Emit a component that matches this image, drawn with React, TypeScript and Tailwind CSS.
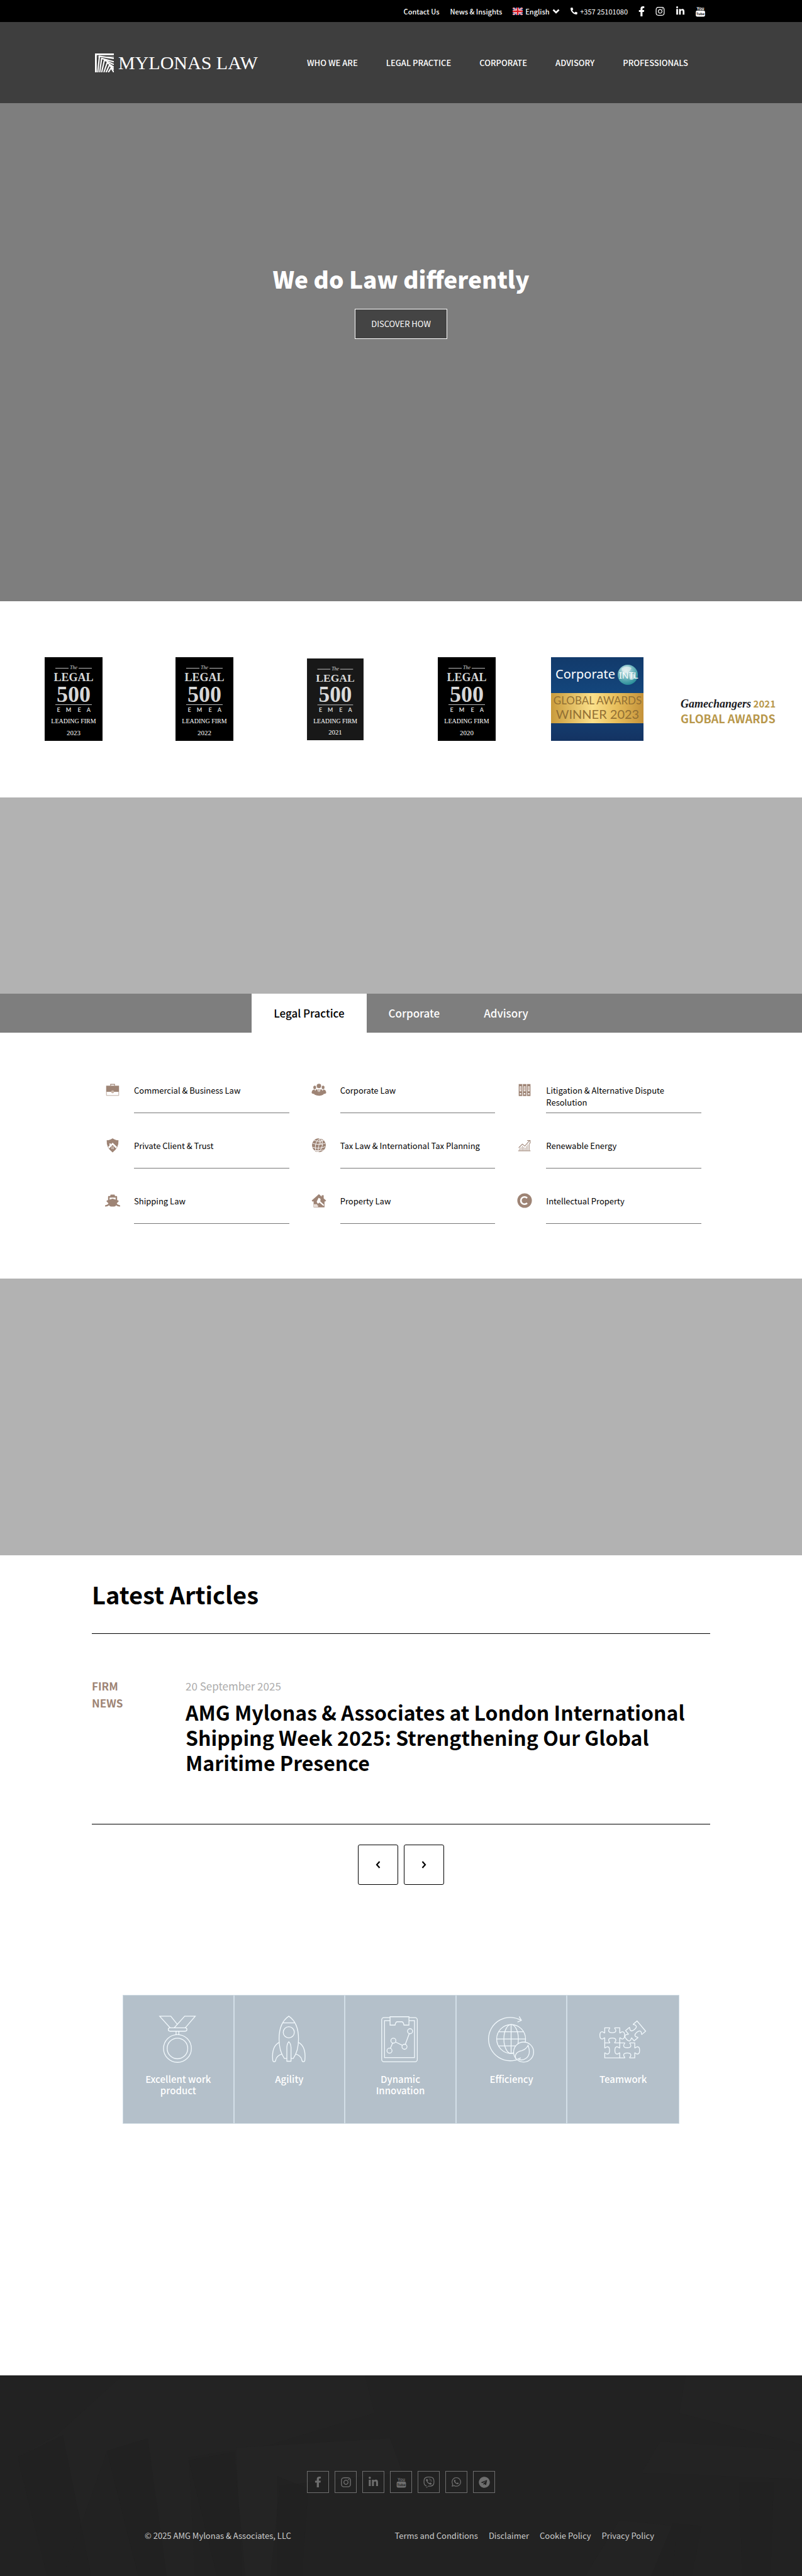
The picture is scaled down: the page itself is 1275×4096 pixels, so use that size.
import type { ReactNode } from 'react';
import {
  FaFacebookF,
  FaInstagram,
  FaLinkedinIn,
  FaPhone,
  FaShip,
  FaTelegram,
  FaViber,
  FaWhatsapp,
} from 'react-icons/fa';

function YoutubeIcon({ className, ink }: { className: string; ink: string }) {
  return (
    <svg viewBox="0 0 18 22" className={className} aria-hidden="true">
      <text
        x="9"
        y="8"
        textAnchor="middle"
        fontSize="8"
        fontWeight="700"
        fontFamily="Liberation Sans, sans-serif"
        fill="currentColor"
      >
        You
      </text>
      <rect x="0" y="9.5" width="18" height="12" rx="3" fill="currentColor" />
      <text
        x="9"
        y="18"
        textAnchor="middle"
        fontSize="7"
        fontWeight="700"
        fontFamily="Liberation Sans, sans-serif"
        fill={ink}
      >
        Tube
      </text>
    </svg>
  );
}

function Flag() {
  return (
    <svg viewBox="0 0 32 24" className="h-3 w-4" aria-hidden="true">
      <rect width="32" height="24" fill="#1d2f7c" />
      <path d="M0 0L32 24M32 0L0 24" stroke="#fff" strokeWidth="5" />
      <path d="M0 0L32 24M32 0L0 24" stroke="#d22" strokeWidth="2" />
      <path d="M16 0V24M0 12H32" stroke="#fff" strokeWidth="8" />
      <path d="M16 0V24M0 12H32" stroke="#d8131f" strokeWidth="5" />
    </svg>
  );
}

function LogoMark() {
  return (
    <svg viewBox="0 0 34 34" className="h-[30px] w-[30px]" aria-hidden="true">
      <g fill="none" stroke="#fff" strokeWidth="2.4">
        <path d="M1.6 34V1.6H34" strokeWidth="3.2" />
        <path d="M5 34L8 5L34 9" />
        <path d="M8.5 34L12 9L34 15" />
        <path d="M12 34L17 12L34 20" />
        <path d="M16 34L22 16.500L34 25" />
        <path d="M20 34L26 21L34 29" />
        <path d="M24 34L29 26L34 34" />
        <path d="M5 6L34 6.500" strokeWidth="1" />
      </g>
    </svg>
  );
}

function Legal500({ year, className }: { year: string; className: string }) {
  return (
    <svg viewBox="0 0 92 133" className={className} role="img" aria-label={`The Legal 500 EMEA leading firm ${year}`}>
      <rect width="92" height="133" fill="#000" />
      <path d="M17 17.500H38M54 17.500H75M17 75.500H75" stroke="#bbb" strokeWidth="1" />
      <g fill="#d6d6d6" textAnchor="middle" fontFamily="Liberation Serif, serif">
        <text x="46" y="19" fontSize="8" fontStyle="italic">The</text>
        <text x="46" y="38" fontSize="18" fontWeight="700">LEGAL</text>
        <text x="46" y="71" fontSize="36" fontWeight="700">500</text>
      </g>
      <g fill="#d6d6d6" textAnchor="middle" fontSize="9" fontWeight="700" fontFamily="Lato, sans-serif">
        <text x="22" y="87">E</text>
        <text x="38" y="87">M</text>
        <text x="55" y="87">E</text>
        <text x="70" y="87">A</text>
      </g>
      <g fill="#fff" textAnchor="middle" fontFamily="Liberation Serif, serif">
        <text x="46" y="105" fontSize="10">LEADING FIRM</text>
        <text x="46" y="124" fontSize="11">{year}</text>
      </g>
    </svg>
  );
}

function CorporateIntl() {
  return (
    <svg viewBox="0 0 147 133" className="h-[133px] w-[147px]" role="img" aria-label="Corporate INTL Global Awards Winner 2023">
      <defs>
        <linearGradient id="gold" x1="0" x2="1">
          <stop offset="0" stopColor="#c99b3c" />
          <stop offset="0.45" stopColor="#fbe08a" />
          <stop offset="0.7" stopColor="#e8bf5c" />
          <stop offset="1" stopColor="#c4923a" />
        </linearGradient>
        <linearGradient id="sea" x1="0" x2="0" y1="0" y2="1">
          <stop offset="0" stopColor="#123a6b" />
          <stop offset="0.5" stopColor="#14487f" />
          <stop offset="1" stopColor="#143362" />
        </linearGradient>
        <radialGradient id="globe" cx="0.4" cy="0.3" r="0.8">
          <stop offset="0" stopColor="#d9eef0" />
          <stop offset="0.5" stopColor="#6bb3bb" />
          <stop offset="1" stopColor="#14828d" />
        </radialGradient>
      </defs>
      <rect width="147" height="133" fill="url(#sea)" />
      <rect y="57" width="147" height="48" fill="url(#gold)" />
      <circle cx="122" cy="28" r="16" fill="url(#globe)" />
      <path d="M112 18Q120 12 128 17Q124 26 118 25Q113 24 112 18ZM124 27Q134 24 134 32Q129 38 125 35Z" fill="#e6eff0" opacity="0.7" />
      <g fontFamily="Noto Sans, sans-serif" fill="#fff">
        <text x="7" y="34" fontSize="20">Corporate</text>
        <text x="108" y="34" fontSize="14">INTL</text>
      </g>
      <g fontFamily="Lato, sans-serif" fill="#927034" textAnchor="middle">
        <text x="74" y="75" fontSize="17">GLOBAL AWARDS</text>
        <text x="74" y="98" fontSize="20">WINNER 2023</text>
      </g>
    </svg>
  );
}

function Gamechangers() {
  return (
    <svg viewBox="0 0 152 133" className="h-[133px] w-[152px]" role="img" aria-label="Gamechangers 2021 Global Awards">
      <g fontFamily="Noto Sans CJK SC, sans-serif" fill="#b8974a" fontWeight="700">
        <text x="151" y="80" fontSize="15" textAnchor="end">2021</text>
        <text x="0" y="105" fontSize="18">GLOBAL AWARDS</text>
      </g>
      <text x="0" y="80" fontSize="18" fontWeight="700" fontStyle="italic" fontFamily="Liberation Serif, serif" fill="#1b1b1f">
        Gamechangers
      </text>
    </svg>
  );
}

function SmallIcon({ children }: { children: ReactNode }) {
  return (
    <svg viewBox="0 0 27 27" className="h-6 w-6" fill="#9e8475" aria-hidden="true">
      {children}
    </svg>
  );
}

const practices: { label: string; icon: ReactNode }[] = [
  {
    label: 'Commercial & Business Law',
    icon: (
      <SmallIcon>
        <path d="M10 6V3.500H17V6" fill="none" stroke="#9e8475" strokeWidth="1.400" />
        <rect x="2" y="6" width="23" height="11" />
        <path d="M2.500 17V23.500H24.500V17" fill="none" stroke="#b5a196" strokeWidth="1" />
        <circle cx="13.500" cy="17" r="2.600" fill="#c9b5a8" />
      </SmallIcon>
    ),
  },
  {
    label: 'Corporate Law',
    icon: (
      <SmallIcon>
        <circle cx="13.500" cy="6.500" r="4" />
        <ellipse cx="6" cy="9" rx="2.500" ry="3.200" />
        <ellipse cx="21" cy="9" rx="2.500" ry="3.200" />
        <path d="M0.500 19Q0.500 13 6 13L8.500 21Q2 21 0.500 19ZM26.500 19Q26.500 13 21 13L18.500 21Q25 21 26.500 19Z" />
        <path d="M5.500 22Q6 12.500 10.500 12L13.500 21L16.500 12Q21 12.500 21.500 22Q13.500 26 5.500 22Z" />
        <path d="M12.500 12.500H14.500L14 16L15 19L13.500 21L12 19L13 16Z" />
      </SmallIcon>
    ),
  },
  {
    label: 'Litigation & Alternative Dispute Resolution',
    icon: (
      <SmallIcon>
        <path d="M3 3H9.300V24.500H3ZM10.400 3H16.700V24.500H10.400ZM17.800 3H24V24.500H17.800Z" />
        <path d="M4.500 7H7.800V16H4.500ZM11.900 7H15.200V16H11.900ZM19.300 7H22.600V16H19.300Z" fill="#f3ece8" />
        <circle cx="6.100" cy="20.500" r="1.400" fill="#fff" />
        <circle cx="13.500" cy="20.500" r="1.400" fill="#fff" />
        <circle cx="20.900" cy="20.500" r="1.400" fill="#fff" />
        <path d="M5.500 8.500H7V14H5.500ZM12.900 8.500H14.400V14H12.900ZM20.200 8.500H21.700V14H20.200Z" fill="#c7b5ab" />
      </SmallIcon>
    ),
  },
  {
    label: 'Private Client & Trust',
    icon: (
      <SmallIcon>
        <path d="M13.500 1Q18 4.500 24 4.500Q25 18 13.500 26.500Q2 18 3 4.500Q9 4.500 13.500 1Z" />
        <path d="M5.500 16.500L13.500 9L21.500 16.500L19.500 19L13.500 13L7.500 19Z" fill="#fff" />
        <path d="M8 10H10V13L8 15Z" fill="#fff" />
        <path d="M11.500 16H13V17.500H11.500ZM14 16H15.500V17.500H14ZM11.500 18.500H13V20H11.500ZM14 18.500H15.500V20H14Z" fill="#fff" />
      </SmallIcon>
    ),
  },
  {
    label: 'Tax Law & International Tax Planning',
    icon: (
      <SmallIcon>
        <circle cx="13.500" cy="13.500" r="12.300" />
        <g fill="none" stroke="#fff" strokeWidth="1">
          <ellipse cx="13.500" cy="13.500" rx="6" ry="12" transform="rotate(14 13.500 13.500)" />
          <path d="M15.500 1L11.500 26M2 10Q13 14 25 10M2 17Q13 21 25 16M5 5Q13 8 22 5M5 23Q13 24 22 22" />
        </g>
        <path d="M15 7H21V11H15Z" />
        <path d="M16.500 6Q18 4 19.500 6V11H16.500Z" fill="none" stroke="#fff" strokeWidth="1" />
      </SmallIcon>
    ),
  },
  {
    label: 'Renewable Energy',
    icon: (
      <SmallIcon>
        <g fill="none" stroke="#9e8475" strokeWidth="1.200">
          <path d="M2 23.500H24" />
          <path d="M3 18L9.500 11.500L14 15L22.500 5M18 5H23.500V10.500" />
          <path d="M4.500 19V23M7 17V23M9.500 15V23M12 16.500V23M14.500 18V23M17 15V23M19.500 12V23M22 9.500V23" strokeWidth="0.900" />
        </g>
      </SmallIcon>
    ),
  },
  {
    label: 'Shipping Law',
    icon: <FaShip className="h-6 w-6 text-[#9e8475]" aria-hidden="true" />,
  },
  {
    label: 'Property Law',
    icon: (
      <SmallIcon>
        <path d="M13.500 2L18.500 6.500V4H22V9.500L26.500 13.500L24.500 15.500L23.500 14.500V25.500H4V14.500L2.500 15.500L0.500 13.500Z" />
        <path d="M13 8.500L16.500 10.500L16 15L23 21.500L21.500 23L14.500 17L13 18.500H11L9.500 15.500Z" fill="#fff" />
        <path d="M4.500 20H10.500V22H12V25H4.500Z" fill="#e9dfd9" />
      </SmallIcon>
    ),
  },
  {
    label: 'Intellectual Property',
    icon: (
      <SmallIcon>
        <circle cx="13.500" cy="13.500" r="13" />
        <path d="M18 9A6.500 6.500 0 1 0 18 18" fill="none" stroke="#fff" strokeWidth="3" />
      </SmallIcon>
    ),
  },
];

const values: { label: string; icon: ReactNode }[] = [
  {
    label: 'Excellent work product',
    icon: (
      <>
        <path d="M42 16L30 1H10L29 22M36 22L55 1H74L56 22" />
        <rect x="25.500" y="22" width="33.500" height="6" rx="3" />
        <path d="M39.500 28V34M44.500 28V34" />
        <circle cx="42" cy="59" r="25" />
        <circle cx="42" cy="59" r="18.500" />
      </>
    ),
  },
  {
    label: 'Agility',
    icon: (
      <>
        <path d="M38.500 77H34C28 69 24.500 57 24.500 42C24.500 24 30 9 42 1C54 9 59.500 24 59.500 42C59.500 57 56 69 50 77H46" />
        <path d="M31.500 13H52.500" />
        <circle cx="42" cy="30" r="10" />
        <path d="M38.500 82V57Q39 50 42 47Q45.500 50 46 57V82Z" />
        <path d="M25 48Q11 55 13 79Q13 83 16 83Q18 83 18.500 80Q20 72 30 69" />
        <path d="M59 48Q73 55 71 79Q71 83 68 83Q66 83 65.500 80Q64 72 54 69" />
      </>
    ),
  },
  {
    label: 'Dynamic Innovation',
    icon: (
      <>
        <rect x="10" y="3.500" width="64" height="79.500" rx="4" />
        <rect x="15" y="9" width="54" height="66.500" />
        <path d="M25 2H59V17H50Q49 11 46 11H38Q35 11 34 17H25Z" fill="#b4c0ca" />
        <path d="M25.500 59L29.500 49.500M35 47.500L47.500 53.500M52.500 51.500L59.500 32.500" />
        <circle cx="24" cy="63" r="4.500" />
        <circle cx="31" cy="45" r="4.500" />
        <circle cx="51" cy="56" r="4.500" />
        <circle cx="61" cy="28" r="4.500" />
      </>
    ),
  },
  {
    label: 'Efficiency',
    icon: (
      <>
        <path d="M60.500 8.500A39 39 0 1 0 58.500 77M57 1.500L61 8.500L54 11.500" />
        <circle cx="42.500" cy="42" r="26" />
        <ellipse cx="42.500" cy="42" rx="13" ry="26" />
        <path d="M42.500 16V68M20 29H65M16.500 42H68.500M20 54.500H65" />
        <circle cx="65" cy="65.500" r="18" fill="#b4c0ca" />
        <path d="M51 78Q47 66 62 63Q70 60 73 53.500Q79 70 69 77Q62 82 55 78L60 76" />
      </>
    ),
  },
  {
    label: 'Teamwork',
    icon: (
      <>
        <path d="M9.500 22h9c1 1-2 2-2 5c0 5 13 5 13 0c0-3-3-4-2-5h9v9c1 1 2-2 5-2c5 0 5 13 0 13c-3 0-4-3-5-2v9h-9c-1-1 2-2 2-5c0-5-13-5-13 0c0 3 3 4 2 5h-9v-9c-1-1-2 2-5 2c-5 0-5-13 0-13c3 0 4 3 5 2z" />
        <path d="M36.500 49h9c1 1-2 2-2 5c0 5 13 5 13 0c0-3-3-4-2-5h9v9c1 1 2-2 5-2c5 0 5 13 0 13c-3 0-4-3-5-2v9h-9c-1-1 2-2 2-5c0-5-13-5-13 0c0 3 3 4 2 5h-9v-9c-1-1-2 2-5 2c-5 0-5-13 0-13c3 0 4 3 5 2z" />
        <path d="M9.500 49v9c1 1 2-2 5-2c5 0 5 13 0 13c-3 0-4-3-5-2v9h27" />
        <path
          transform="translate(47 27) rotate(-40)"
          d="M0 0h9c1 1-2 2-2 5c0 5 13 5 13 0c0-3-3-4-2-5h9v24h-9c-1-1 2-2 2-5c0-5-13-5-13 0c0 3 3 4 2 5h-9v-7c-1-1-2 2-5 2c-5 0-5-13 0-13c3 0 4 3 5 2z"
        />
      </>
    ),
  },
];

const navItems = ['Who we are', 'Legal Practice', 'Corporate', 'Advisory', 'Professionals'];

const footerSocial: { name: string; icon: ReactNode }[] = [
  { name: 'Facebook', icon: <FaFacebookF className="h-[17px] w-[17px]" /> },
  { name: 'Instagram', icon: <FaInstagram className="h-[18px] w-[18px]" /> },
  { name: 'LinkedIn', icon: <FaLinkedinIn className="h-[17px] w-[17px]" /> },
  { name: 'YouTube', icon: <YoutubeIcon className="h-[18px] w-4" ink="#222222" /> },
  { name: 'Viber', icon: <FaViber className="h-[18px] w-[18px]" /> },
  { name: 'WhatsApp', icon: <FaWhatsapp className="h-[17px] w-[17px]" /> },
  { name: 'Telegram', icon: <FaTelegram className="h-[18px] w-[18px]" /> },
];

const footerLinks = ['Terms and Conditions', 'Disclaimer', 'Cookie Policy', 'Privacy Policy'];

function TopBar() {
  return (
    <div className="bg-black text-white">
      <div className="mx-auto flex h-[35px] max-w-[983px] items-center justify-end gap-[17px] pr-2 text-[11px] leading-4">
        <a href="#" className="font-medium">Contact Us</a>
        <a href="#" className="font-medium">News &amp; Insights</a>
        <label className="flex items-center gap-1 font-medium">
          <Flag />
          <select aria-label="Language" className="appearance-none bg-transparent">
            <option>English</option>
          </select>
          <svg viewBox="0 0 12 8" className="h-2 w-3" aria-hidden="true">
            <path d="M1.500 1.500L6 6L10.500 1.500" fill="none" stroke="#fff" strokeWidth="2.600" />
          </svg>
        </label>
        <a href="#" className="flex items-center gap-1">
          <FaPhone className="h-[11px] w-[11px] -scale-x-100" />
          +357 25101080
        </a>
        <a href="#" aria-label="Facebook"><FaFacebookF className="h-4 w-[10px]" /></a>
        <a href="#" aria-label="Instagram"><FaInstagram className="h-4 w-[15px]" /></a>
        <a href="#" aria-label="LinkedIn"><FaLinkedinIn className="h-[15px] w-[15px]" /></a>
        <a href="#" aria-label="YouTube"><YoutubeIcon className="h-[18px] w-[15px]" ink="#000000" /></a>
      </div>
    </div>
  );
}

function Header() {
  return (
    <header className="bg-[#3e3e3e] text-white">
      <div className="mx-auto flex h-[129px] max-w-[983px] items-center justify-between pl-[5px] pr-[35px]">
        <a href="#" className="flex items-center gap-[7px]">
          <LogoMark />
          <span className="font-['Liberation_Serif',serif] text-[30px] leading-8">MYLONAS LAW</span>
        </a>
        <nav className="flex gap-[45px] text-[13px] font-medium uppercase leading-5">
          {navItems.map((item) => (
            <a key={item} href="#">{item}</a>
          ))}
        </nav>
      </div>
    </header>
  );
}

function Practices() {
  return (
    <section>
      <div className="flex justify-center bg-[#7e7e7e] text-[17px] font-medium leading-6 text-white">
        <button type="button" className="h-[62px] bg-white px-[35px] text-black">Legal Practice</button>
        <button type="button" className="h-[62px] px-[35px]">Corporate</button>
        <button type="button" className="h-[62px] px-[35px]">Advisory</button>
      </div>
      <div className="mx-auto grid max-w-[983px] grid-cols-3 pb-[87px] pt-10">
        {practices.map(({ label, icon }) => (
          <a key={label} href="#" className="flex h-[88px] gap-[22px] pl-[21px] pr-[14px] pt-[39px]">
            {icon}
            <span className="h-[49px] flex-1 border-b border-[#777] pt-[3px] text-[13px] leading-[19px] text-black">
              {label}
            </span>
          </a>
        ))}
      </div>
    </section>
  );
}

function Articles() {
  return (
    <section className="mx-auto max-w-[983px]">
      <h2 className="border-b border-black pb-9 pt-9 text-[38px] font-bold leading-[52px]">
        Latest Articles
      </h2>
      <article className="flex border-b border-black pb-[78px] pt-[69px]">
        <p className="w-[149px] shrink-0 pr-[90px] text-[17px] font-bold uppercase leading-[27px] text-[#9e8475]">
          Firm News
        </p>
        <div>
          <p className="text-[17px] leading-[27px] text-[#acacac]">20 September 2025</p>
          <h3 className="mt-2 text-[32px] font-bold leading-10">
            <a href="#">
              AMG Mylonas &amp; Associates at London International Shipping Week 2025: Strengthening Our
              Global Maritime Presence
            </a>
          </h3>
        </div>
      </article>
      <div className="mt-8 flex justify-center gap-[9px]">
        <button type="button" aria-label="Previous" className="flex h-16 w-16 items-center justify-center rounded-[3px] border border-black">
          <svg viewBox="0 0 8 12" className="h-3 w-2" aria-hidden="true">
            <path d="M6.500 1L2 6L6.500 11" fill="none" stroke="#000" strokeWidth="2.200" />
          </svg>
        </button>
        <button type="button" aria-label="Next" className="flex h-16 w-16 items-center justify-center rounded-[3px] border border-black">
          <svg viewBox="0 0 8 12" className="h-3 w-2" aria-hidden="true">
            <path d="M1.500 1L6 6L1.500 11" fill="none" stroke="#000" strokeWidth="2.200" />
          </svg>
        </button>
      </div>
    </section>
  );
}

function Values() {
  return (
    <section className="mx-auto mt-[175px] grid max-w-[885px] grid-cols-5 border border-[#cfdbe3] bg-[#b4c0ca]">
      {values.map(({ label, icon }) => (
        <div
          key={label}
          className="flex h-[203px] flex-col items-center border-r-2 border-[#d3dfe8] px-6 pt-8 text-center last:border-r-0"
        >
          <svg viewBox="0 0 86 86" className="h-[76px] w-[76px] overflow-visible" fill="none" stroke="#f1f8fc" strokeWidth="1.500" aria-hidden="true">
            {icon}
          </svg>
          <p className="mt-4 text-[15px] font-medium leading-[18px] text-white">{label}</p>
        </div>
      ))}
    </section>
  );
}

function Footer() {
  return (
    <footer className="relative mt-[400px] overflow-hidden bg-[#222222] text-[#cccccc]">
      {/* faint fan of strips behind the links */}
      <svg viewBox="0 0 1275 319" preserveAspectRatio="none" className="absolute inset-0 h-full w-full" aria-hidden="true">
        <g fill="#242424">
          <path d="M28 130L90 95L195 0H580L595 60L430 110L300 130L310 319H220L170 120L100 319H75Z" opacity="0.6" />
          <path d="M375 115L620 100L640 155L445 175L430 319H385L375 115Z" />
          <path d="M1090 0H1275V110L1080 60ZM1050 105L1275 120V165L1020 155ZM985 230L1075 240L1070 319H930Z" opacity="0.7" />
        </g>
        <g fill="#202020">
          <path d="M28 130L100 95L145 319H75ZM170 120L235 100L265 319H220ZM300 135L372 122L390 319H345ZM440 160L490 180L480 319H440Z" opacity="0.5" />
          <path d="M1175 170H1230L1225 319H1180ZM1070 235L1115 240L1100 319H1035Z" opacity="0.5" />
        </g>
      </svg>
      <div className="relative">
        <div className="flex justify-center gap-[9px] pt-[152px] text-[#6e6e6e]">
          {footerSocial.map(({ name, icon }) => (
            <a key={name} href="#" aria-label={name} className="flex h-[35px] w-[35px] items-center justify-center border border-[#6e6e6e]">
              {icon}
            </a>
          ))}
        </div>
        <div className="mx-auto flex max-w-[815px] justify-between pb-[54px] pt-[58px] text-[13px] leading-5">
          <p>© 2025 AMG Mylonas &amp; Associates, LLC</p>
          <div className="flex gap-[17px] pr-[5px]">
            {footerLinks.map((link) => (
              <a key={link} href="#">{link}</a>
            ))}
          </div>
        </div>
      </div>
    </footer>
  );
}

export default function App() {
  return (
    <div className="bg-white font-['Noto_Sans_CJK_SC',sans-serif] text-black">
      <TopBar />
      <Header />
      <section className="flex h-[792px] flex-col items-center bg-[#7e7e7e] pt-[253px] text-white">
        <h1 className="text-[37px] font-black leading-[52px]">We do Law differently</h1>
        <a href="#" className="mt-[22px] flex h-12 w-[147px] items-center justify-center border border-white bg-[#444] text-[13px]">
          DISCOVER HOW
        </a>
      </section>
      <section className="grid grid-cols-6 items-center justify-items-center px-[13px] pb-[90px] pt-[89px]">
        <Legal500 year="2023" className="h-[133px] w-[92px]" />
        <Legal500 year="2022" className="h-[133px] w-[92px]" />
        <Legal500 year="2021" className="h-[130px] w-[90px] opacity-90" />
        <Legal500 year="2020" className="h-[133px] w-[92px]" />
        <CorporateIntl />
        <Gamechangers />
      </section>
      <div className="h-[312px] bg-[#b2b2b2]" />
      <Practices />
      <div className="h-[440px] bg-[#b2b2b2]" />
      <Articles />
      <Values />
      <Footer />
    </div>
  );
}
